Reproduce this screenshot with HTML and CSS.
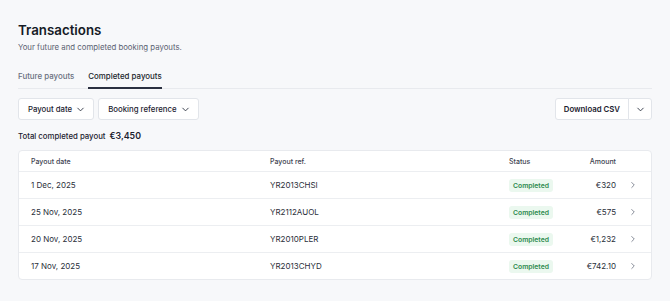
FILE: index.html
```html
<!DOCTYPE html>
<html>
<head>
<meta charset="utf-8">
<link rel="stylesheet" href="styles.css">
</head>
<body>
<div class="page">
  <h1 class="title">Transactions</h1>
  <p class="subtitle">Your future and completed booking payouts.</p>
  <div class="tabs">
    <div class="tab">Future payouts</div>
    <div class="tab active">Completed payouts</div>
  </div>
  <div class="toolbar">
    <div class="filters">
      <button class="btn">Payout date <svg class="chev" viewBox="0 0 16 16"><path d="M4 6l4 4 4-4"/></svg></button>
      <button class="btn">Booking reference <svg class="chev" viewBox="0 0 16 16"><path d="M4 6l4 4 4-4"/></svg></button>
    </div>
    <div class="split">
      <button class="btn split-main">Download CSV</button>
      <button class="btn split-arrow"><svg class="chev" viewBox="0 0 16 16"><path d="M4 6l4 4 4-4"/></svg></button>
    </div>
  </div>
  <div class="total">Total completed payout <strong>€3,450</strong></div>
  <div class="card">
    <div class="row head">
      <div class="c-date">Payout date</div>
      <div class="c-ref">Payout ref.</div>
      <div class="c-status">Status</div>
      <div class="c-amount">Amount</div>
      <div class="c-arrow"></div>
    </div>
    <div class="row">
      <div class="c-date">1 Dec, 2025</div>
      <div class="c-ref">YR2013CHSI</div>
      <div class="c-status"><span class="badge">Completed</span></div>
      <div class="c-amount">€320</div>
      <div class="c-arrow"><svg class="rchev" viewBox="0 0 16 16"><path d="M6 4l4 4-4 4"/></svg></div>
    </div>
    <div class="row">
      <div class="c-date">25 Nov, 2025</div>
      <div class="c-ref">YR2112AUOL</div>
      <div class="c-status"><span class="badge">Completed</span></div>
      <div class="c-amount">€575</div>
      <div class="c-arrow"><svg class="rchev" viewBox="0 0 16 16"><path d="M6 4l4 4-4 4"/></svg></div>
    </div>
    <div class="row">
      <div class="c-date">20 Nov, 2025</div>
      <div class="c-ref">YR2010PLER</div>
      <div class="c-status"><span class="badge">Completed</span></div>
      <div class="c-amount">€1,232</div>
      <div class="c-arrow"><svg class="rchev" viewBox="0 0 16 16"><path d="M6 4l4 4-4 4"/></svg></div>
    </div>
    <div class="row">
      <div class="c-date">17 Nov, 2025</div>
      <div class="c-ref">YR2013CHYD</div>
      <div class="c-status"><span class="badge">Completed</span></div>
      <div class="c-amount">€742.10</div>
      <div class="c-arrow"><svg class="rchev" viewBox="0 0 16 16"><path d="M6 4l4 4-4 4"/></svg></div>
    </div>
  </div>
</div>
</body>
</html>
```
FILE: styles.css
```css
* { box-sizing: border-box; }
html, body { margin: 0; padding: 0; }
body {
  background: #f7f8fa;
  font-family: Inter, "Noto Sans", sans-serif;
  color: #1c2230;
  width: 670px;
  height: 301px;
  overflow: hidden;
}
.page { padding: 22px 18px 0 18px; }
.title {
  margin: 0;
  font-size: 13.3px;
  font-weight: 600;
  line-height: 16px;
  color: #161b26;
}
.subtitle {
  margin: 4px 0 0 0;
  font-size: 7.8px;
  line-height: 10px;
  color: #5b6272;
}
.tabs {
  display: flex;
  gap: 14px;
  margin-top: 19px;
  border-bottom: 1px solid #e8eaee;
}
.tab {
  font-size: 7.9px;
  line-height: 10px;
  padding: 0 0 6px 0;
  color: #6a7080;
  font-weight: 500;
  border-bottom: 2px solid transparent;
  margin-bottom: -1px;
}
.tab.active { color: #1a1f2b; border-bottom-color: #2a3040; }
.toolbar {
  display: flex;
  justify-content: space-between;
  margin-top: 9px;
}
.filters { display: flex; gap: 4px; }
.btn {
  font-family: inherit;
  display: flex;
  align-items: center;
  gap: 3px;
  height: 22px;
  padding: 0 7px 0 9px;
  background: #fff;
  border: 1px solid #e2e5ea;
  border-radius: 3px;
  font-size: 7.8px;
  font-weight: 500;
  color: #1c2230;
}
.chev { width: 11px; height: 11px; fill: none; stroke: #2b3140; stroke-width: 1.3; stroke-linecap: round; stroke-linejoin: round; }
.split { display: flex; }
.split-main { border-radius: 3px 0 0 3px; padding: 0 8px; font-weight: 600; }
.split-arrow { border-radius: 0 3px 3px 0; border-left: 1px solid #e2e5ea; margin-left: -1px; padding: 0; width: 24px; justify-content: center; }
.total {
  margin-top: 10px;
  font-size: 7.8px;
  line-height: 12px;
  color: #1c2230;
  font-weight: 500;
}
.total strong { font-size: 8.8px; font-weight: 600; margin-left: 2px; }
.card {
  margin-top: 8px;
  background: #fff;
  border: 1px solid #e8eaee;
  border-radius: 4px;
}
.row {
  display: flex;
  align-items: center;
  height: 27px;
  padding: 0 12px;
  font-size: 8px;
  color: #2a2f3a;
  border-top: 1px solid #eceef1;
}
.row.head { border-top: none; height: 20px; font-size: 7px; font-weight: 500; color: #3d4350; }
.c-date { width: 239px; }
.c-ref { width: 239px; }
.c-status { width: 68px; }
.c-amount { width: 39px; text-align: right; }
.c-arrow { flex: 1; display: flex; justify-content: flex-end; padding-right: 1px; }
.badge {
  display: inline-block;
  background: #ebf8ef;
  color: #2d8a4e;
  font-size: 6.8px;
  font-weight: 600;
  padding: 2px 4px;
  border-radius: 3px;
  line-height: 9px;
}
.rchev { width: 10px; height: 10px; fill: none; stroke: #6b7180; stroke-width: 1.3; stroke-linecap: round; stroke-linejoin: round; }
```
